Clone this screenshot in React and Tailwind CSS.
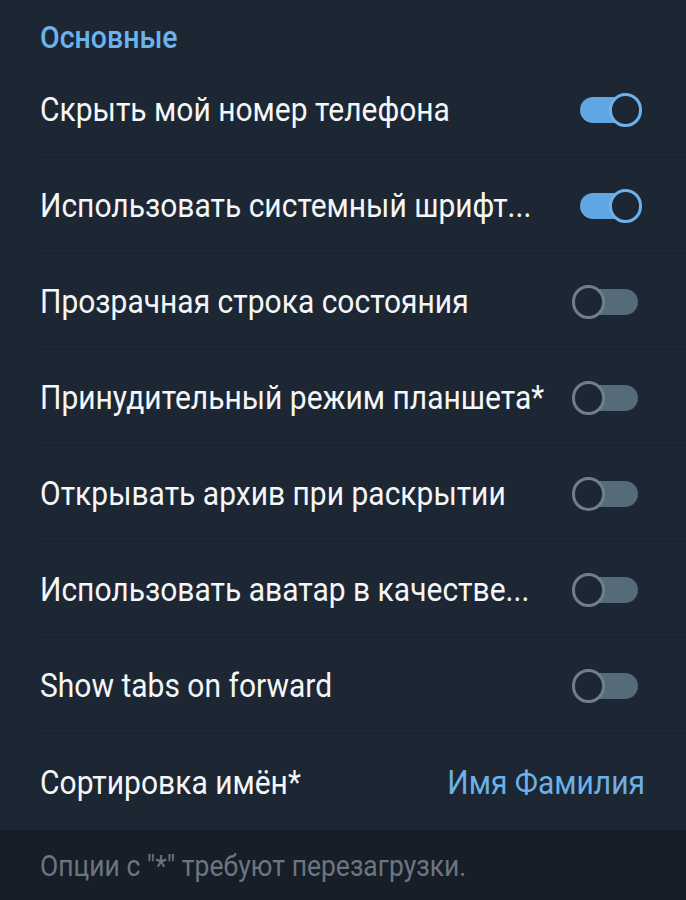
import React from "react";

function Toggle({ on }) {
  if (on) {
    return (
      <div className="relative w-[64px] h-[34px] shrink-0">
        <div className="absolute left-[2px] right-[14px] top-[4px] h-[26px] rounded-full bg-[#5fa6e2]" />
        <div className="absolute right-[0px] top-[0px] w-[33px] h-[34px] rounded-full border-[3px] border-[#6db2ec] bg-[#1d2733]" />
      </div>
    );
  }
  return (
    <div className="relative w-[68px] h-[34px] shrink-0">
      <div className="absolute left-[14px] right-[2px] top-[4px] h-[26px] rounded-full bg-[#566b79]" />
      <div className="absolute left-[0px] top-[0px] w-[33px] h-[34px] rounded-full border-[3px] border-[#6c808c] bg-[#1d2733]" />
    </div>
  );
}

const rows = [
  { t: "Скрыть мой номер телефона", on: true },
  { t: "Использовать системный шрифт...", on: true },
  { t: "Прозрачная строка состояния", on: false },
  { t: "Принудительный режим планшета*", on: false },
  { t: "Открывать архив при раскрытии", on: false },
  { t: "Использовать аватар в качестве...", on: false },
  { t: "Show tabs on forward", on: false },
];

export default function App() {
  return (
    <div
      className="w-[686px] h-[900px] bg-[#1d2733] flex flex-col overflow-hidden"
      style={{ fontFamily: "Roboto, 'Noto Sans', sans-serif" }}
    >
      <div className="h-[62px] shrink-0 flex items-center pl-[40px] pt-[14px]">
        <span className="inline-block text-[28.5px] font-medium text-[#6cb3ee] leading-[1.3] origin-left scale-y-[1.08]">Основные</span>
      </div>
      {rows.map((r, i) => (
        <div key={i} className="h-[96px] shrink-0 ml-[40px] border-b border-[#18202a] flex items-center justify-between pr-[44px]">
          <span className="inline-block text-[30px] text-[#f4f6f8] leading-[1.3] whitespace-nowrap min-w-0 mr-[12px] scale-y-[1.1]">{r.t}</span>
          <div className={r.on ? "mr-[0px]" : "mr-[2px]"}>
            <Toggle on={r.on} />
          </div>
        </div>
      ))}
      <div className="h-[96px] shrink-0 pl-[40px] flex items-center justify-between pr-[41px]">
        <span className="inline-block text-[30px] text-[#f4f6f8] leading-[1.3] scale-y-[1.1]">Сортировка имён*</span>
        <span className="inline-block text-[30px] text-[#6cb0e8] leading-[1.3] scale-y-[1.1]">Имя Фамилия</span>
      </div>
      <div className="flex-1 bg-[#171e27] pl-[40px] pt-[19px]">
        <span className="inline-block text-[26.5px] text-[#6b7681] leading-[1.3] origin-left scale-y-[1.1]">Опции с "*" требуют перезагрузки.</span>
      </div>
    </div>
  );
}
